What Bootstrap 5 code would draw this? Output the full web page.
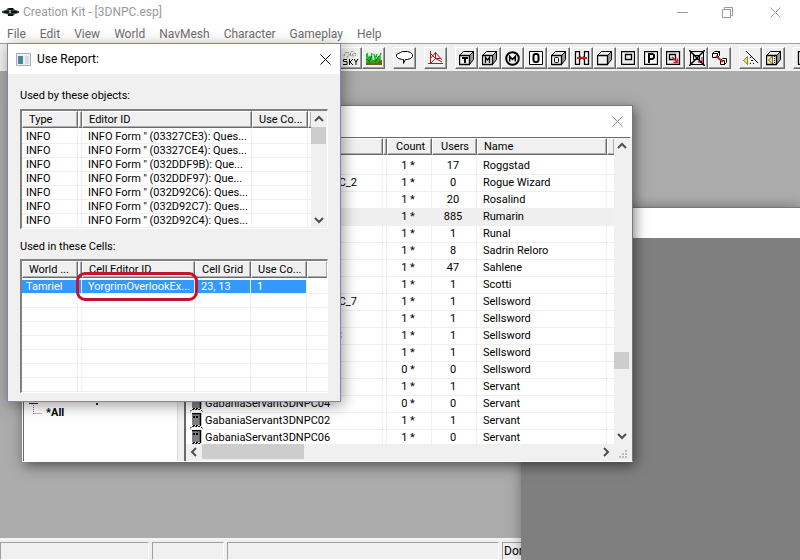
<!DOCTYPE html>
<html lang="en">
<head>
<meta charset="utf-8">
<meta name="viewport" content="width=device-width, initial-scale=1">
<title>Creation Kit - [3DNPC.esp]</title>
<link href="https://cdn.jsdelivr.net/npm/bootstrap@5.3.0/dist/css/bootstrap.min.css" rel="stylesheet">
<style>
  body { font: 12px/16px Roboto, "Open Sans", sans-serif; color: #000; }
  button { border: 0; padding: 0; background: none; color: inherit; }
  svg { display: block; }
  .app-title { height: 24px; color: #999; padding-left: 2px; }
  .app-title .capt { width: 45px; display: flex; justify-content: center; }
  .app-title .capt-end { width: 50px; }
  .menus { height: 19px; gap: 14px; padding-left: 7px; }
  .menus a { color: #6d6d6d; text-decoration: none; }
  .tools { height: 28px; background: #f0f0f0; border-top: 1px solid #a0a0a0; padding: 3px 0 1px 339px; gap: 8px; }
  .tool { width: 23px; height: 22px; flex: none; display: flex; align-items: center; justify-content: center; background: #f0f0f0;
    border: 1px solid; border-color: #fff #696969 #696969 #fff; box-shadow: inset -1px -1px #a0a0a0; }
  .mdi { background: #ababab; }
  .status { height: 22px; background: #f0f0f0; padding: 3px 0 1px; gap: 3px; border-top: 1px solid #f7f7f7; }
  .panel { border: 1px solid; border-color: #a0a0a0 #fff #fff #a0a0a0; padding: 0 1px; height: 18px; }
  .p-a { width: 149px; } .p-b { width: 72px; } .p-c { width: 272px; }

  .win { position: absolute; font: 11px/14px Roboto, "Liberation Sans", sans-serif; }
  .win-render { left: 521px; top: 207px; right: 0; bottom: 0; background: #7f7f7f; border-top: 1px solid #777; box-shadow: 0 0 12px rgba(0,0,0,.35); }
  .win-render .bar { height: 30px; background: #fff; }
  .win-objects { left: 22px; top: 105px; width: 611px; height: 357px; background: #f0f0f0; border: 1px solid #777; border-bottom-color: #fff; border-left-color: #fff; box-shadow: 2px 4px 12px rgba(0,0,0,.5); }
  .win-objects .bar { height: 31px; background: #fff; padding-right: 9px; color: #8a8a8a; }
  .win-report { left: 7px; top: 43px; width: 334px; height: 359px; background: #f0f0f0; border: 1px solid #8d7fa6; box-shadow: 2px 3px 14px rgba(0,0,0,.4); }
  .win-report .bar { height: 30px; background: #fff; padding: 0 9px 0 8px; gap: 6px; font: 12px/16px Roboto, "Open Sans", sans-serif; }
  .report-body { padding: 15px 12px 8px; }
  .list { background: #fff; border: 1px solid; border-width: 2px 1px 1px 2px; border-color: #808080 #fff #fff #808080; overflow: hidden; display: flex; }
  .list-a { height: 120px; margin: 6px 0 11px; }
  .list-b { height: 134px; margin-top: 5px; }

  .grid { table-layout: fixed; border-collapse: separate; border-spacing: 0; width: 100%; margin: 0; }
  .grid th { height: 17px; background: #f0f0f0; font-weight: 400; padding: 1px 0 0 6px; line-height: 14px; white-space: nowrap; overflow: hidden;
    border: 1px solid; border-color: #fff #696969 #696969 #fff; box-shadow: inset -1px -1px #b0b0b0; }
  .grid th.slim { padding: 0; }
  .grid th.mid { padding-left: 8px; }
  .grid td { height: 14px; line-height: 13px; padding: 0 0 0 6px; white-space: nowrap; overflow: hidden; border: solid #efefef; border-width: 0 1px 1px 0; }
  .grid td:first-child { padding-left: 4px; }
  .grid td:last-child, .grid th:last-child { border-right: 0; }
  .grid tbody::before { content: ""; display: table-row; height: 2px; }
  .tall tbody::before { height: 3px; }
  .tall td { height: 17px; line-height: 16px; }
  .tall td:nth-child(3), .tall td:nth-child(4) { text-align: center; padding: 0 2px 0 0; }
  .tall td.tail { text-align: right; padding-right: 25px; }
  .tall td.tail-far { text-align: right; padding-right: 40px; }
  .tall .hot td { background: #efefef; }
  .npc { display: inline-block; vertical-align: top; margin-right: 1px; }
  .picked td { background: #3399ff; color: #fff; }
  .picked td:last-child { background: #fff; }
  .picked td.ringed { position: relative; overflow: visible; }
  .ring { position: absolute; left: -6px; right: -4px; top: -8px; bottom: -8px; border: 3px solid #c4122f; border-radius: 9px; }

  .sb { background: #f0f0f0; color: #505050; flex: none; display: flex; }
  .sb-v { width: 16px; flex-direction: column; }
  .sb-h { height: 16px; }
  .sb button { width: 16px; height: 16px; display: flex; align-items: center; justify-content: center; flex: none; }
  .thumb { background: #cdcdcd; flex: none; }
  .sb-v .thumb { height: 17px; width: 15px; }
  .sb-h .thumb { width: 102px; height: 15px; }
  .lead-in { flex: 197 0 0; } .lead-out { flex: 59 0 0; }
  .tree { width: 155px; flex: none; background: #fff; border-right: 1px solid #dcdcdc; border-left: 1px solid #696969; padding: 0 0 39px 5px; }
  .objects { border-left: 2px solid #696969; border-top: 1px solid #696969; margin-left: 6px; margin-right: 2px; }
  .sheet { background: #fff; overflow: hidden; height: 306px; }
  .tree-row { height: 17px; line-height: 16px; font-weight: 700; }
</style>
<script src="https://cdn.jsdelivr.net/npm/bootstrap@5.3.0/dist/js/bootstrap.bundle.min.js"></script>
</head>
<body class="vh-100 overflow-hidden position-relative d-flex flex-column bg-white">

<svg width="0" height="0" class="position-absolute" aria-hidden="true">
  <defs>
    <g id="cube" fill="none" stroke="#000"><path d="M10.500 4.500l4-4v8l-4 5z" fill="#999"/><path d="M.5 4.500l4-4h10l-4 4z" fill="#f0f0f0"/><path d="M.5 4.500h10v9h-10z" fill="#f0f0f0" stroke-width="1.300"/></g>
    <g id="up"><path d="M1 6l4-4 4 4" fill="none" stroke="currentColor" stroke-width="2"/></g>
    <g id="down"><path d="M1 2l4 4 4-4" fill="none" stroke="currentColor" stroke-width="2"/></g>
    <g id="npc"><path d="M2 1h8v11H2z" fill="#808080"/><path d="M10.500 0v13M2 .5h8" stroke="#000" stroke-width="1.500"/><path d="M3 3h2v2H3zM6 3h2v2H6z" fill="#000"/><path d="M0 15.500l2-2h8l3 2M3 12.500h6" stroke="#000" fill="none" stroke-dasharray="2 1"/></g>
    <g id="close"><path d="M.5.5l10 10M10.500.5l-10 10" fill="none" stroke="currentColor"/></g>
  </defs>
</svg>

<header class="app-title d-flex align-items-center flex-shrink-0">
  <svg width="17" height="12" viewBox="0 0 17 12"><path d="M0 5l4-1 2-2h5l2 2 4 1v2l-4 1-2 2H7L5 8 0 7z" fill="#3b4443"/><path d="M2 6h13M7 3h4M6 9h5" stroke="#111" stroke-width="2"/><path d="M7 4h2v3H7z" fill="#7da39b"/></svg>
  <span class="ms-1 flex-grow-1">Creation Kit - [3DNPC.esp]</span>
  <button class="capt" aria-label="Minimize"><svg width="11" height="11"><path d="M0 5.500h11" stroke="currentColor"/></svg></button>
  <button class="capt" aria-label="Restore"><svg width="11" height="11"><path d="M.5 2.500h8v8h-8zM2.500 2V.5h8v8H9" fill="none" stroke="currentColor"/></svg></button>
  <button class="capt capt-end" aria-label="Close"><svg width="11" height="11"><use href="#close"/></svg></button>
</header>

<nav class="menus d-flex align-items-center flex-shrink-0">
  <a href="#">File</a><a href="#">Edit</a><a href="#">View</a><a href="#">World</a><a href="#">NavMesh</a><a href="#">Character</a><a href="#">Gameplay</a><a href="#">Help</a>
</nav>

<div class="tools d-flex flex-shrink-0 overflow-hidden" role="toolbar" aria-label="Tools">
  <div class="d-flex">
    <button class="tool" aria-label="Sky"><svg width="17" height="16"><path d="M2 6l1-3 3-1 1 3M8 5l1-3 3-1M10 5l2-2 3 1M5 7l3-2 3 1 3-1" fill="none" stroke="#888" stroke-dasharray="2 1"/><path d="M5 9.500H1.500v2H5v3H1M7.500 9v6M11 9l-3 3 3 3M12 9l2 3 2-3M14 12v3" fill="none" stroke="#000"/></svg></button>
    <button class="tool" aria-label="Grass"><svg width="16" height="14"><path d="M0 9l5 1 5-2 6 1v5H0z" fill="#7c5a12"/><path d="M1 12L0 3M3 11L1 2M4 12L6 2M7 12L5 5M8 12l3-9M10 11L8 3M11 12l4-10M14 10V5M2 11l2-6" stroke="#12c21c" stroke-width="1.500"/><path d="M3 10l3-5M9 11l4-6M1 8l3 3" stroke="#075f16"/></svg></button>
  </div>
  <button class="tool" aria-label="Dialogue"><svg width="17" height="15"><path d="M4.500 1.500l2-1h5l3 1 2 2v2l-2 2-3 1h-2l-2 4v-4h-1l-4-1-2-2v-2z" fill="#fff" stroke="#000"/></svg></button>
  <button class="tool" aria-label="Navmesh"><svg width="16" height="15"><path d="M2.500 0v13M0 12.500h15M2.500 7.500L7.500 1.500l6 7M7.500 1v7M2.500 2.500l5 5h6M2.500 12.500l5-5M7.500 7.500L14 11" fill="none" stroke="#a51f22"/></svg></button>
  <div class="d-flex">
    <button class="tool" aria-label="Cube T"><svg width="16" height="15"><use href="#cube"/><path d="M3 7h6M6 7v5" stroke="#000" stroke-width="2"/></svg></button>
    <button class="tool" aria-label="Cube M"><svg width="16" height="15"><use href="#cube"/><path d="M3.500 12V6.500L5.500 9l2-2.500V12" fill="none" stroke="#000" stroke-width="1.400"/></svg></button>
    <button class="tool" aria-label="Circle M"><svg width="15" height="15"><circle cx="7.500" cy="7.500" r="6.300" fill="none" stroke="#000" stroke-width="2"/><path d="M4.700 10.500v-5l2.800 3 2.800-3v5" fill="none" stroke="#000" stroke-width="1.500"/></svg></button>
    <button class="tool" aria-label="Square O"><svg width="14" height="14"><path d="M.5.5h13v13H.5z" fill="#fff" stroke="#000"/><rect x="4.500" y="3" width="5" height="8" rx="2" fill="none" stroke="#000" stroke-width="2"/></svg></button>
    <button class="tool" aria-label="Cube O"><svg width="16" height="15"><use href="#cube"/><rect x="3.500" y="6.500" width="4" height="5" rx="1" fill="none" stroke="#000"/></svg></button>
    <button class="tool" aria-label="Portal"><svg width="16" height="14"><path d="M1.500.5h4v13h-4zM10.500.5h4v13h-4z" fill="#fff" stroke="#000" stroke-width="1.300"/><path d="M3 7h10" stroke="#c92026" stroke-width="2"/><path d="M6.500 5v4M9.500 5v4" stroke="#c92026"/></svg></button>
    <button class="tool" aria-label="Cube"><svg width="16" height="15"><use href="#cube"/></svg></button>
    <button class="tool" aria-label="Room"><svg width="14" height="14"><path d="M.5.5h13v13H.5zM4.500 3.500h6v5h-6z" fill="none" stroke="#000" stroke-width="1.300"/></svg></button>
    <button class="tool" aria-label="Square P"><svg width="14" height="14"><path d="M.5.5h13v13H.5z" fill="#fff" stroke="#000" stroke-width="1.300"/><path d="M5 12V3h3.500L10 4v2.500L8.500 8H5" fill="none" stroke="#000" stroke-width="2"/></svg></button>
    <button class="tool" aria-label="Room link"><svg width="15" height="14"><path d="M.5.5h13v13H.5zM3.500 3.500h6v5h-6z" fill="none" stroke="#000" stroke-width="1.300"/><path d="M6 6l5 5M7.500 11.500h4v-4" fill="none" stroke="#c92026" stroke-width="1.500"/></svg></button>
    <button class="tool" aria-label="Room unlink"><svg width="16" height="16"><path d="M1.500 1.500h13v13h-13zM4.500 5.500h6v4h-6z" fill="none" stroke="#000"/><path d="M13 7v5H9" fill="none" stroke="#c92026" stroke-width="1.300"/><path d="M0 0l16 16M16 0L0 16" stroke="#000" stroke-width="1.500"/></svg></button>
    <button class="tool" aria-label="Linked cubes"><svg width="16" height="15"><path d="M.5 2.500l2-2h5v4l-2 2h-5zM.5 2.500h5v4M5.500 2.500l2-2M8.500 9.500l2-2h4v4l-2 2h-4zM8.500 9.500h4v4" fill="#fff" stroke="#000"/><path d="M4 5l7 6" stroke="#c92026" stroke-width="2"/></svg></button>
  </div>
  <div class="d-flex">
    <button class="tool" aria-label="Light"><svg width="16" height="15"><path d="M3 0l12 12" stroke="#000"/><path d="M.5 9.500l4-4v8z" fill="#f4ea2a" stroke="#555" stroke-width=".7"/><path d="M7 6.500h1M8 9.500h2M7 12.500h1M10 12.500h1" stroke="#000"/></svg></button>
    <button class="tool" aria-label="Light cube"><svg width="16" height="15"><use href="#cube"/><path d="M2.500 9l4-4v8z" fill="#f4ea2a" stroke="#333" stroke-width=".7"/><path d="M8.500 5v8" stroke="#000" stroke-dasharray="1 1"/></svg></button>
  </div>
  <button class="tool" aria-label="Sheet"><svg width="16" height="14"><path d="M1.500.5h13v13h-13z" fill="#fff" stroke="#000" stroke-width="1.300"/></svg></button>
</div>

<main class="mdi flex-grow-1"></main>

<footer class="status d-flex flex-shrink-0">
  <div class="panel p-a"></div><div class="panel p-b"></div><div class="panel p-c"></div><div class="panel flex-grow-1">Done</div>
</footer>

<section class="win win-render" aria-label="Render window"><div class="bar"></div></section>

<section class="win win-objects d-flex flex-column" aria-label="Object window">
  <div class="bar d-flex align-items-center justify-content-end flex-shrink-0"><button aria-label="Close"><svg width="11" height="11"><use href="#close"/></svg></button></div>
  <div class="d-flex flex-grow-1 overflow-hidden">
    <div class="tree d-flex flex-column justify-content-end">
      <svg width="72" height="2"><path d="M0 0h9v1H0zM67 0h2v2h-2z" fill="#222"/></svg>
      <div class="tree-row d-flex"><svg width="13" height="16"><path d="M4.500 0v9M4.500 8.500h9" fill="none" stroke="#777" stroke-dasharray="1 1"/></svg><span class="ms-1">*All</span></div>
    </div>
    <div class="objects d-flex flex-column flex-grow-1 overflow-hidden">
      <div class="d-flex">
        <div class="sheet flex-grow-1">
          <table class="grid tall">
            <colgroup><col><col style="width:4px"><col style="width:45px"><col style="width:45px"><col style="width:130px"><col style="width:7px"></colgroup>
            <thead><tr><th></th><th class="slim"></th><th class="mid">Count</th><th class="mid">Users</th><th>Name</th><th class="slim"></th></tr></thead>
            <tbody>
              <tr><td></td><td></td><td>1 *</td><td>17</td><td>Roggstad</td><td></td></tr>
              <tr><td class="tail">C_2</td><td></td><td>1 *</td><td>0</td><td>Rogue Wizard</td><td></td></tr>
              <tr><td></td><td></td><td>1 *</td><td>20</td><td>Rosalind</td><td></td></tr>
              <tr class="hot"><td></td><td></td><td>1 *</td><td>885</td><td>Rumarin</td><td></td></tr>
              <tr><td></td><td></td><td>1 *</td><td>1</td><td>Runal</td><td></td></tr>
              <tr><td></td><td></td><td>1 *</td><td>8</td><td>Sadrin Reloro</td><td></td></tr>
              <tr><td></td><td></td><td>1 *</td><td>47</td><td>Sahlene</td><td></td></tr>
              <tr><td></td><td></td><td>1 *</td><td>1</td><td>Scotti</td><td></td></tr>
              <tr><td class="tail">C_7</td><td></td><td>1 *</td><td>1</td><td>Sellsword</td><td></td></tr>
              <tr><td></td><td></td><td>1 *</td><td>1</td><td>Sellsword</td><td></td></tr>
              <tr><td class="tail-far">C</td><td></td><td>1 *</td><td>1</td><td>Sellsword</td><td></td></tr>
              <tr><td></td><td></td><td>1 *</td><td>1</td><td>Sellsword</td><td></td></tr>
              <tr><td></td><td></td><td>0 *</td><td>0</td><td>Sellsword</td><td></td></tr>
              <tr><td></td><td></td><td>1 *</td><td>1</td><td>Servant</td><td></td></tr>
              <tr><td><svg class="npc" width="14" height="16"><use href="#npc"/></svg>GabaniaServant3DNPC04</td><td></td><td>0 *</td><td>0</td><td>Servant</td><td></td></tr>
              <tr><td><svg class="npc" width="14" height="16"><use href="#npc"/></svg>GabaniaServant3DNPC02</td><td></td><td>1 *</td><td>1</td><td>Servant</td><td></td></tr>
              <tr><td><svg class="npc" width="14" height="16"><use href="#npc"/></svg>GabaniaServant3DNPC06</td><td></td><td>1 *</td><td>0</td><td>Servant</td><td></td></tr>
            </tbody>
          </table>
        </div>
        <div class="sb sb-v"><button aria-label="Scroll up"><svg width="10" height="8"><use href="#up"/></svg></button><div class="lead-in"></div><div class="thumb"></div><div class="lead-out"></div><button aria-label="Scroll down"><svg width="10" height="8"><use href="#down"/></svg></button></div>
      </div>
      <div class="sb sb-h"><button aria-label="Scroll left"><svg width="8" height="10"><path d="M6 1L2 5l4 4" fill="none" stroke="currentColor" stroke-width="2"/></svg></button><div class="thumb"></div><div class="flex-grow-1"></div><button aria-label="Scroll right"><svg width="8" height="10"><path d="M2 1l4 4-4 4" fill="none" stroke="currentColor" stroke-width="2"/></svg></button>
        <svg width="16" height="16"><path d="M11 6h2v2h-2zM8 9h2v2H8zM11 9h2v2h-2zM5 12h2v2H5zM8 12h2v2H8zM11 12h2v2h-2z" fill="#bbb"/></svg></div>
    </div>
  </div>
</section>

<section class="win win-report" role="dialog" aria-labelledby="reportTitle">
  <div class="bar d-flex align-items-center">
    <svg width="15" height="13"><path d="M.5.5h14v12H.5z" fill="#eef1f4" stroke="#aab"/><path d="M2 3h5v8H2z" fill="#3f8d84"/><path d="M2 3h2v8H2z" fill="#5a7ea5"/><path d="M9 3h4v8H9z" fill="#d4dbe2"/></svg>
    <span id="reportTitle" class="flex-grow-1">Use Report:</span>
    <button aria-label="Close"><svg width="11" height="11"><use href="#close"/></svg></button>
  </div>
  <div class="report-body">
    <div>Used by these objects:</div>
    <div class="list list-a">
      <div class="flex-grow-1">
        <table class="grid">
          <colgroup><col style="width:56px"><col style="width:4px"><col><col style="width:56px"><col style="width:3px"></colgroup>
          <thead><tr><th>Type</th><th class="slim"></th><th>Editor ID</th><th>Use Co...</th><th class="slim"></th></tr></thead>
          <tbody>
            <tr><td>INFO</td><td></td><td>INFO Form '' (03327CE3): Ques...</td><td></td><td></td></tr>
            <tr><td>INFO</td><td></td><td>INFO Form '' (03327CE4): Ques...</td><td></td><td></td></tr>
            <tr><td>INFO</td><td></td><td>INFO Form '' (032DDF9B): Que...</td><td></td><td></td></tr>
            <tr><td>INFO</td><td></td><td>INFO Form '' (032DDF97): Que...</td><td></td><td></td></tr>
            <tr><td>INFO</td><td></td><td>INFO Form '' (032D92C6): Ques...</td><td></td><td></td></tr>
            <tr><td>INFO</td><td></td><td>INFO Form '' (032D92C7): Ques...</td><td></td><td></td></tr>
            <tr><td>INFO</td><td></td><td>INFO Form '' (032D92C4): Ques...</td><td></td><td></td></tr>
          </tbody>
        </table>
      </div>
      <div class="sb sb-v"><button aria-label="Scroll up"><svg width="10" height="8"><use href="#up"/></svg></button><div class="thumb"></div><div class="flex-grow-1"></div><button aria-label="Scroll down"><svg width="10" height="8"><use href="#down"/></svg></button></div>
    </div>
    <div>Used in these Cells:</div>
    <div class="list list-b">
      <table class="grid">
        <colgroup><col style="width:56px"><col style="width:4px"><col style="width:113px"><col style="width:56px"><col style="width:56px"><col></colgroup>
        <thead><tr><th>World ...</th><th class="slim"></th><th>Cell Editor ID</th><th>Cell Grid</th><th>Use Co...</th><th></th></tr></thead>
        <tbody>
          <tr class="picked"><td>Tamriel</td><td></td><td class="ringed">YorgrimOverlookEx...<span class="ring"></span></td><td>23, 13</td><td>1</td><td></td></tr>
          <tr><td></td><td></td><td></td><td></td><td></td><td></td></tr>
          <tr><td></td><td></td><td></td><td></td><td></td><td></td></tr>
          <tr><td></td><td></td><td></td><td></td><td></td><td></td></tr>
          <tr><td></td><td></td><td></td><td></td><td></td><td></td></tr>
          <tr><td></td><td></td><td></td><td></td><td></td><td></td></tr>
          <tr><td></td><td></td><td></td><td></td><td></td><td></td></tr>
          <tr><td></td><td></td><td></td><td></td><td></td><td></td></tr>
        </tbody>
      </table>
    </div>
  </div>
</section>
</body>
</html>
